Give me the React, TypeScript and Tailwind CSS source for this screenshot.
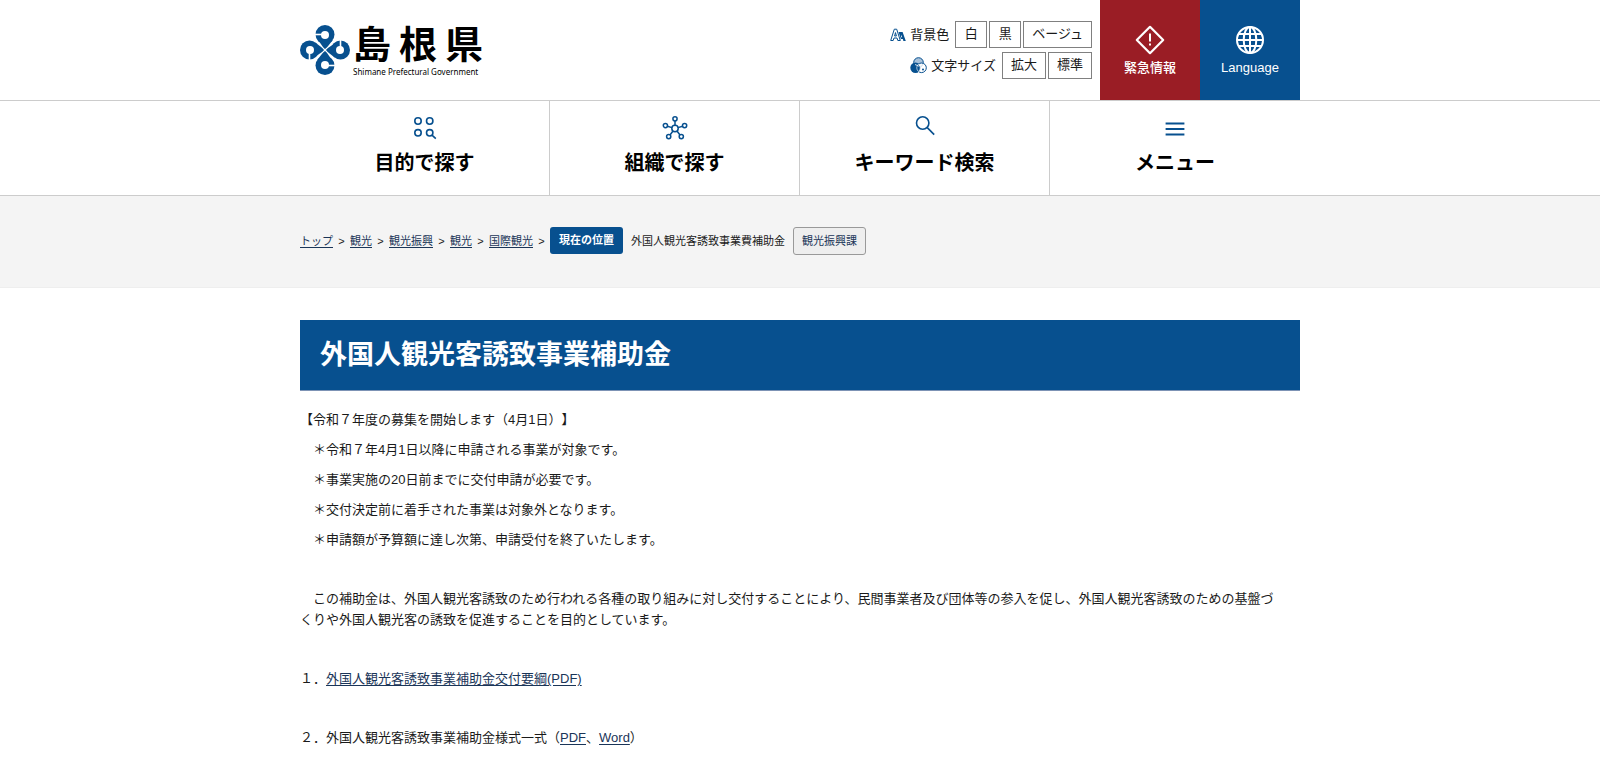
import React from 'react';

const BLUE = '#07508f';

interface NavItem {
  label: string;
  icon: React.ReactNode;
}

const EmblemIcon = () => (
  <svg width="50" height="50" viewBox="0 0 50 50" className="mt-px" aria-hidden="true">
    {[0, 90, 180, 270].map((angle) => (
      <g key={angle} transform={`rotate(${angle} 25 25)`}>
        <path d="M18.5 15.5 L25 25 L32.8 14.9 Z" fill={BLUE} />
        <circle cx="25" cy="9.5" r="9.5" fill={BLUE} />
        <circle cx="25" cy="10" r="4" fill="#fff" />
        <path d="M14 9.5 H25" stroke="#fff" strokeWidth="1.6" />
      </g>
    ))}
    <path d="M21 21 L25 24 L29 21 L26 25 L29 29 L25 26 L21 29 L24 25 Z" fill="#fff" />
  </svg>
);

const LettersIcon = () => (
  <svg width="16" height="14" viewBox="0 0 16 14" fill="none" aria-hidden="true">
    <path d="M.7 12.5 L4.3 1.2 H6.7 L10.3 12.5 H7.8 L7 10 H4 L3.2 12.5 Z M4.6 8 H6.4 L5.5 4.6 Z" stroke={BLUE} strokeWidth="1" />
    <path d="M8.6 4 H12.6 L15.8 13 H13.4 L12.8 11 H10.9 L9.5 7 Z M11 9.2 H12.2 L11.5 6.8 Z" fill={BLUE} fillRule="evenodd" />
  </svg>
);

const ColorsIcon = () => (
  <svg width="17" height="17" viewBox="0 0 17 17" fill="none" aria-hidden="true">
    <circle cx="8.5" cy="5.5" r="4.8" fill="#a9c2da" stroke={BLUE} />
    <circle cx="5.5" cy="10.8" r="5.2" fill={BLUE} />
    <circle cx="11.5" cy="10.8" r="4.8" fill="#fff" fillOpacity=".8" stroke={BLUE} />
    <path d="M8.5 7.2 A4.8 4.8 0 0 1 8.5 14.6 A4.8 4.8 0 0 1 8.5 7.2" fill={BLUE} stroke="#fff" strokeWidth=".6" />
    <path d="M5 7.5 L8.5 9 L12 7.5" stroke="#fff" strokeWidth=".8" />
    <circle cx="13" cy="12.4" r="1" fill={BLUE} />
  </svg>
);

const AlertIcon = () => (
  <svg width="30" height="30" viewBox="0 0 30 30" fill="none" stroke="#fff" aria-hidden="true">
    <path d="M15 1.8 L28.2 15 L15 28.2 L1.8 15 Z" strokeWidth="2.2" strokeLinejoin="round" />
    <path d="M15 8.5 V16.5 M15 18.4 V20.6" strokeWidth="2" />
  </svg>
);

const GlobeIcon = () => (
  <svg width="30" height="30" viewBox="0 0 30 30" fill="none" stroke="#fff" strokeWidth="2" aria-hidden="true">
    <circle cx="15" cy="15" r="13" />
    <ellipse cx="15" cy="15" rx="6.3" ry="13" />
    <path d="M15 2 V28 M2 15 H28 M4 9 H26 M4 21 H26" />
  </svg>
);

const PurposeIcon = () => (
  <svg width="26" height="26" viewBox="0 0 26 26" fill="none" stroke={BLUE} strokeWidth="1.6" aria-hidden="true">
    <circle cx="6" cy="6" r="3.2" />
    <circle cx="17.7" cy="6" r="3.2" />
    <circle cx="6" cy="17.8" r="3.2" />
    <circle cx="17.7" cy="17.8" r="3.2" />
    <path d="M20 20.2 L23.8 23.6" />
  </svg>
);

const OrganizationIcon = () => (
  <svg width="26" height="26" viewBox="0 0 26 26" fill="none" stroke={BLUE} strokeWidth="1.5" aria-hidden="true">
    <circle cx="13" cy="13.5" r="3.2" />
    <circle cx="13" cy="3.8" r="2.1" />
    <circle cx="22.6" cy="10.6" r="2.1" />
    <circle cx="3.4" cy="10.6" r="2.1" />
    <circle cx="6.7" cy="21.6" r="2.1" />
    <circle cx="19.3" cy="21.6" r="2.1" />
    <path d="M13 5.9 V10.3 M20.6 11.2 L16 12.6 M5.4 11.2 L10 12.6 M8 20 L11 16 M18 20 L15 16" />
  </svg>
);

const SearchIcon = () => (
  <svg width="26" height="26" viewBox="0 0 26 26" fill="none" stroke={BLUE} strokeWidth="1.6" aria-hidden="true">
    <circle cx="10.7" cy="8" r="6.2" />
    <path d="M15 12.4 L22.2 19.6" />
  </svg>
);

const MenuIcon = () => (
  <svg width="26" height="26" viewBox="0 0 26 26" stroke={BLUE} strokeWidth="1.8" aria-hidden="true">
    <path d="M3.6 8.5 H22.4 M3.6 14 H22.4 M3.6 19.5 H22.4" />
  </svg>
);

const navItems: NavItem[] = [
  { label: '目的で探す', icon: <PurposeIcon /> },
  { label: '組織で探す', icon: <OrganizationIcon /> },
  { label: 'キーワード検索', icon: <SearchIcon /> },
  { label: 'メニュー', icon: <MenuIcon /> },
];

const breadcrumbs = ['トップ', '観光', '観光振興', '観光', '国際観光'];

const notices = [
  '【令和７年度の募集を開始します（4月1日）】',
  '　＊令和７年4月1日以降に申請される事業が対象です。',
  '　＊事業実施の20日前までに交付申請が必要です。',
  '　＊交付決定前に着手された事業は対象外となります。',
  '　＊申請額が予算額に達し次第、申請受付を終了いたします。',
];

const SettingButton = ({ children }: { children: React.ReactNode }) => (
  <button className="h-[27px] min-w-[32px] border border-[#808080] bg-white px-2 pb-[2px] text-[13px] leading-[20px]">{children}</button>
);

const TextLink = ({ children }: { children: React.ReactNode }) => (
  <a href="#" className="text-[#1a3558] underline underline-offset-2">{children}</a>
);

const Header = () => (
  <header className="border-b border-[#ccc]">
    <div className="mx-auto flex h-[100px] max-w-[1000px] items-start">
      <a href="#" className="mt-[24px] flex gap-[3px]">
        <EmblemIcon />
        <span className="flex flex-col text-black">
          <span className="flex h-[42px] items-center gap-2 text-[38px] font-bold leading-[40px]">
            <span>島</span>
            <span>根</span>
            <span>県</span>
          </span>
          <span className="whitespace-nowrap font-['Noto_Sans'] text-[8px] leading-[12px]">Shimane Prefectural Government</span>
        </span>
      </a>
      <div className="ml-auto mr-2 mt-[21px] flex flex-col items-end gap-1">
        <div className="flex items-center gap-[2px]">
          <LettersIcon />
          <span className="ml-[2px] mr-1 text-[13px]">背景色</span>
          <SettingButton>白</SettingButton>
          <SettingButton>黒</SettingButton>
          <SettingButton>ベージュ</SettingButton>
        </div>
        <div className="flex items-center gap-[2px]">
          <ColorsIcon />
          <span className="ml-[2px] mr-1 text-[13px]">文字サイズ</span>
          <SettingButton>拡大</SettingButton>
          <SettingButton>標準</SettingButton>
        </div>
      </div>
      <a href="#" className="flex h-full w-[100px] flex-col items-center bg-[#9a1d25] pt-[25px] text-[13px] font-medium leading-[26px] text-white">
        <AlertIcon />
        緊急情報
      </a>
      <a href="#" className="flex h-full w-[100px] flex-col items-center bg-[#07508f] pt-[25px] text-[13px] font-medium leading-[26px] text-white">
        <GlobeIcon />
        Language
      </a>
    </div>
  </header>
);

const GlobalNav = () => (
  <nav className="border-b border-[#ccc]">
    <ul className="mx-auto grid max-w-[1000px] grid-cols-4">
      {navItems.map((item) => (
        <li key={item.label} className="border-r border-[#ccc] last:border-r-0">
          <button className="flex h-[94px] w-full flex-col items-center gap-2 pt-[14px] text-[20px] font-bold leading-[28px] text-black">
            {item.icon}
            {item.label}
          </button>
        </li>
      ))}
    </ul>
  </nav>
);

const Breadcrumb = () => (
  <div className="border-b border-[#eee] bg-[#f4f4f4]">
    <div className="mx-auto flex h-[91px] max-w-[1000px] items-center pb-[2px] text-[11px] leading-[16px]">
      {breadcrumbs.map((name, idx) => (
        <span key={idx} className="flex">
          <TextLink>{name}</TextLink>
          <span className="w-[17px] text-center">&gt;</span>
        </span>
      ))}
      <span className="rounded-[3px] bg-[#07508f] px-[9px] py-[6px] font-bold leading-[15px] text-white">現在の位置</span>
      <span className="ml-2">外国人観光客誘致事業費補助金</span>
      <a href="#" className="ml-2 rounded-[3px] border border-[#999] bg-[#eee] px-2 py-[5px] text-[#1a3558]">観光振興課</a>
    </div>
  </div>
);

const App: React.FC = () => {
  return (
    <div className="min-h-screen bg-white font-['Liberation_Sans','Noto_Sans_CJK_JP',sans-serif] text-[13px] leading-[21px] text-[#1a1a1a] [text-spacing-trim:space-all]">
      <Header />
      <GlobalNav />
      <Breadcrumb />
      <main className="mx-auto max-w-[1000px] pt-8">
        <h1 className="mb-[18px] border-b border-[#7d93b5] bg-[#07508f] px-5 py-[17px] text-[27px] font-bold leading-[36px] text-white">
          外国人観光客誘致事業補助金
        </h1>
        <div className="flex flex-col gap-[9px]">
          {notices.map((text) => (
            <p key={text}>{text}</p>
          ))}
        </div>
        <p className="mt-[38px]">
          {'　この補助金は、外国人観光客誘致のため行われる各種の取り組みに対し交付することにより、民間事業者及び団体等の参入を促し、外国人観光客誘致のための基盤づ'}
          <br />
          くりや外国人観光客の誘致を促進することを目的としています。
        </p>
        <p className="mt-[38px]">
          １．<TextLink>外国人観光客誘致事業補助金交付要綱(PDF)</TextLink>
        </p>
        <p className="mt-[38px]">
          ２．外国人観光客誘致事業補助金様式一式（<TextLink>PDF</TextLink>、<TextLink>Word</TextLink>）
        </p>
      </main>
    </div>
  );
};

export default App;
